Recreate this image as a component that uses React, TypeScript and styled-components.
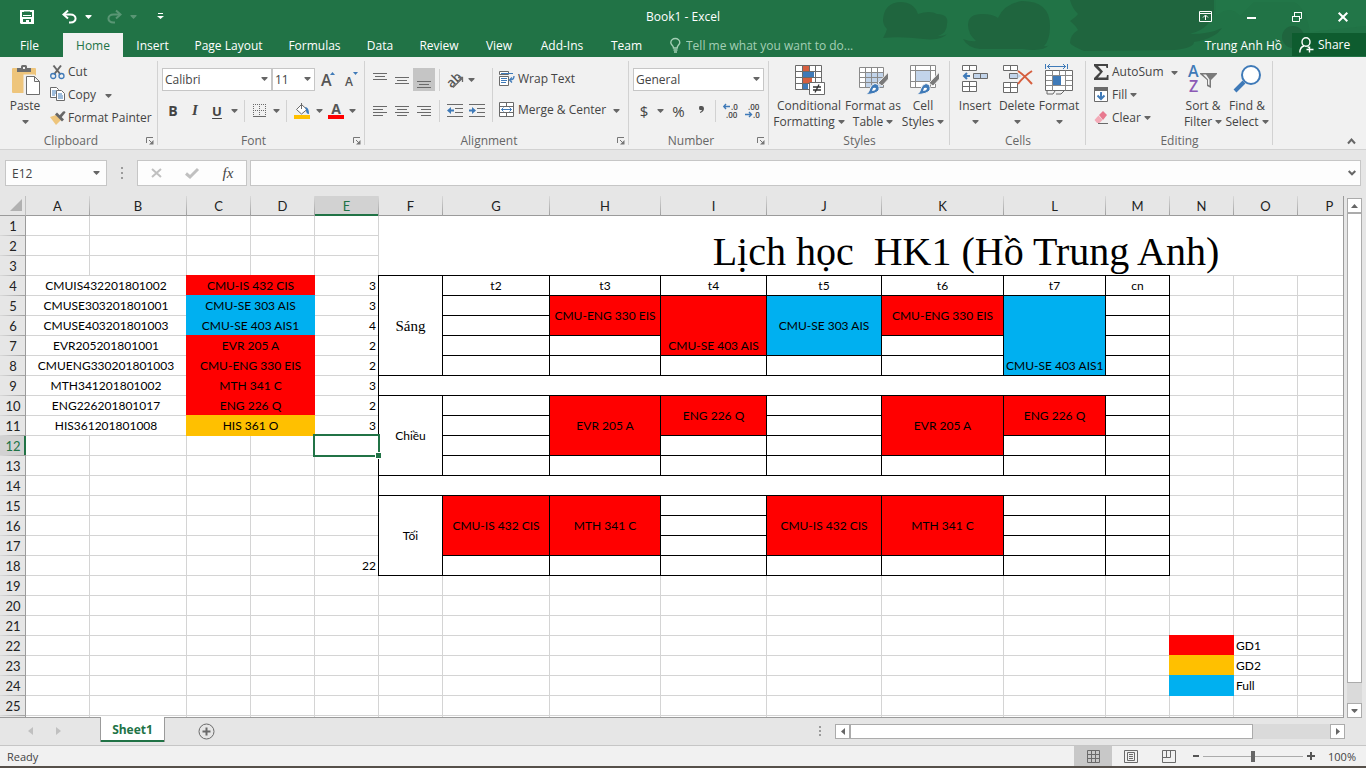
import React from "react";
import styled, { createGlobalStyle, css } from "styled-components";

const ui = '"Open Sans", "Noto Sans", sans-serif';
const cellFont = 'Lato, "Noto Sans", sans-serif';
const green = "#217346";
const RED = "#ff0000";
const BLUE = "#00b0f0";
const GOLD = "#ffc000";

const Global = createGlobalStyle`
  *, *::before, *::after { box-sizing: border-box; }
  body { margin: 0; background: #e6e6e6; font-family: ${ui}; font-size: 12px; color: #444; }
  button, input, select { font: inherit; color: inherit; }
  button { background: none; border: 0; padding: 0; margin: 0; white-space: nowrap; }
  svg { display: block; flex: none; overflow: visible; }
`;

const Window = styled.div`
  display: flex;
  flex-direction: column;
  height: 100vh;
  overflow: hidden;
`;

/* ---------- title bar and tabs ---------- */
const Header = styled.header`
  position: relative;
  flex: none;
  background: ${green};
  color: #fff;
`;
const Doodle = styled.svg`
  position: absolute;
  top: 0;
  right: 0;
  overflow: hidden;
`;
const TitleBar = styled.div`
  position: relative;
  display: grid;
  grid-template-columns: 1fr auto 1fr;
  align-items: center;
  height: 33px;
`;
const QuickAccess = styled.div`
  display: flex;
  align-items: center;
  padding-left: 16px;
`;
const QuickButton = styled.button<{ $w: number; $gap?: number; $dim?: boolean }>`
  display: flex;
  align-items: center;
  justify-content: center;
  width: ${(p) => p.$w}px;
  height: 24px;
  margin-left: ${(p) => p.$gap ?? 0}px;
  opacity: ${(p) => (p.$dim ? 0.25 : 1)};
`;
const Title = styled.h1`
  margin: 0;
  font-size: 12px;
  font-weight: 400;
`;
const WindowButtons = styled.div`
  display: flex;
  justify-content: flex-end;
`;
const WindowButton = styled.button`
  display: flex;
  align-items: center;
  justify-content: center;
  width: 46px;
  height: 30px;
`;
const TabBar = styled.nav`
  position: relative;
  display: flex;
  height: 24px;
`;
const Tab = styled.button<{ $w: number; $active?: boolean }>`
  width: ${(p) => p.$w}px;
  flex: none;
  color: ${(p) => (p.$active ? green : "#fff")};
  background: ${(p) => (p.$active ? "#f1f1f1" : "transparent")};
  &:first-child { padding-right: 4px; }
`;
const TellMe = styled.label`
  display: flex;
  align-items: center;
  gap: 5px;
  flex: 1;
  padding-left: 15px;
`;
const TellMeInput = styled.input`
  width: 190px;
  border: 0;
  padding: 0;
  background: transparent;
  outline: none;
  &::placeholder { color: #a3cfb5; opacity: 1; }
`;
const UserName = styled.button`
  margin-right: 10px;
`;
const ShareButton = styled.button`
  display: flex;
  align-items: center;
  gap: 4px;
  width: 74px;
  height: 23px;
  padding-left: 7px;
  background: #0e5c2f;
`;

/* ---------- ribbon ---------- */
const Ribbon = styled.section`
  flex: none;
  display: flex;
  height: 93px;
  padding-top: 4px;
  background: #f1f1f1;
  border-bottom: 1px solid #d2d2d2;
`;
const Group = styled.div<{ $w: number }>`
  flex: none;
  display: flex;
  flex-direction: column;
  width: ${(p) => p.$w}px;
  background: linear-gradient(#d2d2d2, #d2d2d2) right top / 1px 84px no-repeat;
`;
const GroupBody = styled.div<{ $pad?: number }>`
  flex: none;
  display: flex;
  height: 72px;
  padding-left: ${(p) => p.$pad ?? 4}px;
`;
const GroupFooter = styled.div`
  flex: none;
  display: flex;
  align-items: center;
  height: 16px;
  color: #666;
  button { margin: 0 4px; }
`;
const GroupName = styled.span`
  flex: 1;
  text-align: center;
  line-height: 16px;
`;
const Stack = styled.div<{ $gap?: number; $top?: number; $left?: number }>`
  display: flex;
  flex-direction: column;
  flex: none;
  gap: ${(p) => p.$gap ?? 0}px;
  padding-top: ${(p) => p.$top ?? 0}px;
  padding-left: ${(p) => p.$left ?? 0}px;
`;
const Line = styled.div`
  display: flex;
  align-items: center;
  height: 23px;
`;
const BigButton = styled.button<{ $w: number }>`
  display: flex;
  flex-direction: column;
  align-items: center;
  width: ${(p) => p.$w}px;
  padding-top: 4px;
  line-height: 16px;
`;
const BigIcon = styled.span`
  height: 33px;
`;
const WithCaret = styled.span`
  display: flex;
  align-items: center;
  justify-content: center;
  gap: 3px;
  height: 16px;
`;
const TextButton = styled.button<{ $w?: number }>`
  display: flex;
  align-items: center;
  gap: 3px;
  height: 23px;
  padding-bottom: 2px;
  width: ${(p) => (p.$w ? `${p.$w}px` : "auto")};
`;
const IconButton = styled.button<{ $w?: number; $active?: boolean }>`
  display: flex;
  align-items: center;
  justify-content: center;
  width: ${(p) => p.$w ?? 22}px;
  height: 23px;
  background: ${(p) => (p.$active ? "#c5c5c5" : "transparent")};
`;
const Glyph = styled.span<{ $b?: boolean; $i?: boolean; $u?: boolean; $serif?: boolean; $size?: number }>`
  font-size: ${(p) => p.$size ?? 14}px;
  font-weight: ${(p) => (p.$b ? 700 : 400)};
  font-style: ${(p) => (p.$i ? "italic" : "normal")};
  font-family: ${(p) => (p.$serif ? '"Liberation Serif", serif' : ui)};
  text-decoration: ${(p) => (p.$u ? "underline" : "none")};
  text-underline-offset: 2px;
`;
const Divider = styled.span<{ $h: number }>`
  flex: none;
  width: 1px;
  height: ${(p) => p.$h}px;
  margin: 0 4px;
  background: #d2d2d2;
`;
const ComboBox = styled.span<{ $w: number }>`
  position: relative;
  display: block;
  width: ${(p) => p.$w}px;
  height: 23px;
  svg { position: absolute; right: 4px; top: 9px; pointer-events: none; }
`;
const Select = styled.select`
  appearance: none;
  width: 100%;
  height: 100%;
  padding: 0 2px;
  border: 1px solid #c6c6c6;
  border-radius: 0;
  background: #fff;
`;
const Collapse = styled.button`
  display: flex;
  align-items: flex-end;
  justify-content: flex-end;
  flex: 1;
  padding: 0 10px 4px 0;
`;

/* ---------- formula bar ---------- */
const FormulaBar = styled.div`
  flex: none;
  display: flex;
  align-items: center;
  height: 46px;
  padding: 0 5px;
`;
const Field = styled.div<{ $w?: number }>`
  display: flex;
  align-items: center;
  height: 26px;
  background: #fdfdfd;
  border: 1px solid #c6c6c6;
  ${(p) => (p.$w ? css`flex: none; width: ${p.$w}px;` : css`flex: 1; margin-left: 3px;`)}
`;
const FieldInput = styled.input`
  flex: 1;
  min-width: 0;
  height: 100%;
  padding: 0 6px;
  border: 0;
  background: transparent;
  outline: none;
`;
const FieldButton = styled.button<{ $w: number }>`
  display: flex;
  align-items: center;
  justify-content: center;
  width: ${(p) => p.$w}px;
  height: 24px;
`;
const Grip = styled.span`
  display: flex;
  justify-content: center;
  width: 30px;
`;

/* ---------- sheet ---------- */
const SheetArea = styled.main`
  flex: 1;
  min-height: 0;
  display: flex;
`;
const Viewport = styled.div`
  flex: 1;
  min-width: 0;
  overflow: hidden;
  border-right: 1px solid #9b9b9b;
  border-bottom: 1px solid #9b9b9b;
`;
const Sheet = styled.table`
  table-layout: fixed;
  width: 1554px;
  border-collapse: separate;
  border-spacing: 0;
  background: #fff;
  color: #000;
  font-family: ${cellFont};
  font-size: 13px;
  line-height: 18px;
`;
const Corner = styled.td`
  height: 20px;
  padding: 0 3px 2px 0;
  background: #e6e6e6;
  border-right: 1px solid #c0c0c0;
  border-bottom: 1px solid #9b9b9b;
  svg { margin-left: auto; }
`;
const ColHead = styled.th<{ $on: boolean }>`
  height: 20px;
  padding: 0;
  font-weight: 400;
  background: ${(p) => (p.$on ? "#d2d2d2" : "#e6e6e6")};
  color: ${(p) => (p.$on ? green : "#222")};
  border-right: 1px solid;
  border-image: linear-gradient(#dcdcdc, #9b9b9b) 1;
  box-shadow: inset 0 -${(p) => (p.$on ? 2 : 1)}px 0 ${(p) => (p.$on ? green : "#9b9b9b")};
`;
const RowHead = styled.th<{ $on: boolean }>`
  height: 20px;
  padding: 0;
  font-weight: 400;
  background: ${(p) => (p.$on ? "#d2d2d2" : "#e6e6e6")};
  color: ${(p) => (p.$on ? green : "#222")};
  border-bottom: 1px solid;
  border-image: linear-gradient(90deg, #dcdcdc, #9b9b9b) 1;
  box-shadow: inset -${(p) => (p.$on ? 2 : 1)}px 0 0 ${(p) => (p.$on ? green : "#9b9b9b")};
`;
const Cell = styled.td<{ $edge?: string; $bg?: string; $align?: string; $v?: string; $font?: string }>`
  height: 20px;
  padding: 0 2px;
  font-size: 12px;
  white-space: nowrap;
  text-align: ${(p) => p.$align ?? "left"};
  vertical-align: ${(p) => p.$v ?? "bottom"};
  border-right: 1px solid ${(p) => p.$edge ?? "#d4d4d4"};
  border-bottom: 1px solid ${(p) => p.$edge ?? "#d4d4d4"};
  ${(p) => p.$bg && css`background: ${p.$bg};`}
  ${(p) => p.$edge && css`
    position: relative;
    box-shadow: -1px 0 0 ${p.$edge}, 0 -1px 0 ${p.$edge}, -1px -1px 0 ${p.$edge};
  `}
  ${(p) => p.$font === "title" && css`
    font-family: "Liberation Serif", serif;
    font-size: 40px;
    line-height: 46px;
    white-space: pre;
  `}
  ${(p) => p.$font === "serif" && css`
    font-family: "Liberation Serif", serif;
    font-size: 15px;
  `}
`;
const SelectedCell = styled(Cell)`
  position: relative;
  z-index: 2;
`;
const Selection = styled.span`
  position: absolute;
  inset: -2px;
  border: 2px solid ${green};
  &::after {
    content: "";
    position: absolute;
    right: -4px;
    bottom: -4px;
    width: 7px;
    height: 7px;
    background: ${green};
    border: 1px solid #fff;
  }
`;

/* ---------- scroll bars ---------- */
const VScroll = styled.div`
  flex: none;
  display: flex;
  flex-direction: column;
  width: 22px;
  padding: 2px 4px 0 3px;
`;
const ScrollButton = styled.button`
  display: flex;
  align-items: center;
  justify-content: center;
  flex: none;
  width: 15px;
  height: 15px;
  background: #fff;
  border: 1px solid #ababab;
`;
const Track = styled.div<{ $row?: boolean }>`
  flex: 1;
  display: flex;
  flex-direction: ${(p) => (p.$row ? "row" : "column")};
  background: #dadada;
`;
const Thumb = styled.div<{ $size: string }>`
  flex: 0 0 ${(p) => p.$size};
  background: #fff;
  border: 1px solid #ababab;
`;

/* ---------- sheet tabs and status bar ---------- */
const SheetBar = styled.div`
  flex: none;
  display: flex;
  align-items: flex-start;
  height: 27px;
  padding: 0 21px 0 16px;
`;
const NavButton = styled.button`
  display: flex;
  align-items: center;
  justify-content: center;
  width: 28px;
  height: 26px;
`;
const SheetTab = styled.button`
  width: 65px;
  height: 25px;
  margin: -1px 27px 0 28px;
  background: #fff;
  color: ${green};
  font-weight: 700;
  border: solid #9b9b9b;
  border-width: 0 1px;
  box-shadow: inset 0 -2px 0 ${green};
`;
const HScroll = styled.div`
  display: flex;
  width: 510px;
  height: 15px;
  margin: 6px 0 0 1px;
`;
const Spacer = styled.span`
  flex: 1;
`;
const StatusBar = styled.footer`
  flex: none;
  display: flex;
  align-items: center;
  height: 23px;
  padding-left: 7px;
  background: #f1f1f1;
  border-top: 1px solid #c6c6c6;
  border-bottom: 2px solid #56504a;
  font-size: 11px;
`;
const ViewButton = styled.button<{ $active?: boolean }>`
  display: flex;
  align-items: center;
  justify-content: center;
  width: 38px;
  height: 20px;
  background: ${(p) => (p.$active ? "#c8c8c8" : "transparent")};
`;
const ZoomButton = styled.button`
  width: 15px;
  height: 20px;
  display: flex;
  align-items: center;
  justify-content: center;
`;
const ZoomSlider = styled.input`
  appearance: none;
  width: 100px;
  height: 12px;
  margin: 0;
  background: linear-gradient(#ababab, #ababab) center / 100% 1px no-repeat;
  &::-webkit-slider-thumb {
    appearance: none;
    width: 4px;
    height: 11px;
    background: #666;
  }
`;
const ZoomValue = styled.button`
  width: 48px;
  text-align: center;
`;

/* ---------- icons ---------- */
const G = "#6a6a6a";
const B = "#3f7ab8";

const Caret = ({ color = "#666" }: { color?: string }) => (
  <svg width="7" height="4"><path d="M.5 0h6v1L3.500 4 .5 1z" fill={color} /></svg>
);
const Launcher = () => (
  <svg width="8" height="8" fill="none" stroke="#777">
    <path d="M.5 6V.5H7M3 3l3 3" /><path d="M7.500 3v4.500H3z" fill="#777" stroke="none" />
  </svg>
);
const Lines = ({ rows, y = 0 }: { rows: [number, number][]; y?: number }) => (
  <svg width="14" height="18" fill={G}>
    {rows.map(([x, w], i) => <rect key={i} x={x} y={y + i * 3} width={w} height="1" />)}
  </svg>
);
const SaveIcon = () => (
  <svg width="14" height="14">
    <path d="M0 0h14v14H1l-1-1z" fill="#fff" />
    <path d="M2 2h1v4h8V2h1v5H2zM4 1.500h6V5H4z" fill={green} />
    <path d="M3 2h8v3H3z" fill={green} /><path d="M3 9h8v3H9v-2H6v2H3z" fill={green} />
  </svg>
);
const UndoIcon = () => (
  <svg width="15" height="14" fill="none" stroke="#fff" strokeWidth="2">
    <path d="M6 .5L1.500 4.500 6 8.500" /><path d="M2 4.500h6.500c6.500 0 7 8 0 8H7" />
  </svg>
);
const RedoIcon = () => (
  <svg width="15" height="14" fill="none" stroke="#fff" strokeWidth="2">
    <path d="M9 .5l4.500 4L9 8.500" /><path d="M13 4.500H6.500c-6.500 0-7 8 0 8H8" />
  </svg>
);
const PasteIcon = () => (
  <svg width="29" height="31">
    <rect x="1" y="3" width="24" height="25" rx="1" fill="#eec57c" />
    <path d="M6 7V3h4V1.500Q10 0 11.500 0h3Q16 0 16 1.500V3h4v4z" fill="#6d6d6d" />
    <rect x="12" y="2" width="2" height="2" fill="#f1f1f1" />
    <path d="M14 11h9l5.500 5.500V30H14z" fill="#fff" stroke="#f1f1f1" strokeWidth="3" />
    <path d="M15.500 11.500h8l5 5v13h-13zM23.500 11.500v5h5" fill="#fff" stroke="#6d6d6d" />
  </svg>
);
const CutIcon = () => (
  <svg width="15" height="16" fill="none">
    <path d="M3.500 1.500l7 9M11 1.500l-7 9" stroke="#666" strokeWidth="2" />
    <circle cx="3.200" cy="12" r="2.500" stroke={B} strokeWidth="1.300" />
    <circle cx="11.500" cy="12" r="2.500" stroke={B} strokeWidth="1.300" />
  </svg>
);
const CopyIcon = () => (
  <svg width="15" height="15" fill="#fff" stroke={G}>
    <path d="M.5 .5h6l2 2v8h-8z" /><path d="M2 4h4M2 6h4M2 8h3" stroke={B} />
    <path d="M6.500 3.500h5l3 3v7h-8z" /><path d="M8 7h4M8 9h5M8 11h5" stroke={B} />
  </svg>
);
const BrushIcon = () => (
  <svg width="15" height="14">
    <path d="M0 6l6-2 5 5-5 5z" fill="#eec57c" /><path d="M5 3.500l2-2 7 7-2 2z" fill="#666" />
    <path d="M9 5l4-4.500q2-1 2.500 1L11 7z" fill="#666" />
  </svg>
);
const GrowIcon = ({ up }: { up?: boolean }) => (
  <svg width="14" height="16">
    <text x="0" y="14" fontSize={up ? 16 : 12} fontWeight="600" fill="#555" fontFamily="Open Sans">A</text>
    <path d={up ? "M9 3l2.500-3L14 3z" : "M8 0h5L10.500 3z"} fill={B} />
  </svg>
);
const BordersIcon = () => (
  <svg width="14" height="14" fill="none" stroke={G}>
    <path d="M.5 0v12M6.500 0v12M12.500 0v12M0 .5h13M0 6.500h13" strokeDasharray="1 1" />
    <path d="M0 12.500h13" />
  </svg>
);
const FillColorIcon = () => (
  <svg width="16" height="16">
    <path d="M7.500 1.500l5.500 5-5.500 4.500L2.500 6.500z" fill="#fff" stroke={G} /><path d="M7.500 6V0" stroke={G} />
    <path d="M11 4q4 0 4 7-3 0-3-4z" fill={B} /><rect y="12" width="16" height="4" fill={GOLD} />
  </svg>
);
const FontColorIcon = () => (
  <svg width="16" height="16">
    <text x="8" y="11" fontSize="14" fontWeight="700" textAnchor="middle" fill="#555" fontFamily="Open Sans">A</text>
    <rect y="12" width="16" height="4" fill={RED} />
  </svg>
);
const OrientIcon = () => (
  <svg width="16" height="16">
    <text x="-1" y="13" fontSize="13" fontWeight="600" fill="#555" fontFamily="Open Sans" transform="rotate(-45 6 8)">ab</text>
    <path d="M6 15.500L15 6.500M11 5.500h4.500V10" fill="none" stroke={G} strokeWidth="1.300" />
  </svg>
);
const IndentIcon = ({ right }: { right?: boolean }) => (
  <svg width="16" height="14" fill={G}>
    <path d="M0 0h16v1H0zM8 4h8v1H8zM8 8h8v1H8zM0 12h16v1H0z" />
    <path d={right ? "M7 6.500L3 3v2.500H0v2h3V10z" : "M0 6.500L4 3v2.500h3v2H4V10z"} fill={B} />
  </svg>
);
const WrapIcon = () => (
  <svg width="16" height="16" fill="none" stroke={G}>
    <path d="M.5 .5h9v3h-9zM.5 5.500h9v9h-9z" fill="#fff" />
    <path d="M2 2.500h12M2 7.500h6M2 9.500h6M2 11.500h5" stroke={B} />
    <path d="M15 5q0 4-4 4M13 6.500L10.500 9l2.500 2.500" stroke={B} strokeWidth="1.300" />
  </svg>
);
const MergeIcon = () => (
  <svg width="16" height="16" fill="none" stroke={G}>
    <path d="M.5 .5h14v14H.5zM.5 4.500h14M.5 10.500h14M7.500 .5v4M7.500 10.500v4" fill="#fff" />
    <path d="M2.500 7.500h10M4.500 5.500l-2 2 2 2M10.500 5.500l2 2-2 2" stroke={B} />
  </svg>
);
const DecimalIcon = ({ less }: { less?: boolean }) => (
  <svg width="17" height="16" fontFamily="Open Sans" fontSize="8" fontWeight="600">
    <text x={less ? 3 : 8} y="7" fill="#444">{less ? ".00" : ".0"}</text>
    <text x={less ? 8 : 3} y="15" fill="#444">{less ? ".0" : ".00"}</text>
    <path d={less ? "M0 11.500h6M4 9l2.500 2.500L4 14" : "M1 3.500h6M3 1L.8 3.500 3 6"} fill="none" stroke={B} strokeWidth="1.400" />
  </svg>
);
const gridPath = "M.5 .5h26v24H.5zM.5 6.500h26M.5 12.500h26M.5 18.500h26M7.500 .5v24M14.500 .5v24M20.500 .5v24";
const ConditionalIcon = () => (
  <svg width="28" height="31" fill="none">
    <path d={gridPath} fill="#fff" stroke={G} />
    <path d="M8 1h6v5H8zM8 13h9v5H8z" fill="#d65f3f" /><path d="M8 7h11v5H8zM8 19h5v5H8z" fill={B} />
    <path d="M14.500 17.500h15v12h-15z" fill="#fff" stroke={G} />
    <path d="M18 22h8M18 25h8M24 19.500l-4 8" stroke="#333" strokeWidth="1.300" />
  </svg>
);
const StyleBrush = () => (
  <>
    <path d="M29.500 7v7L23 21l-4-3z" fill="#7a7a7a" stroke="#f1f1f1" />
    <path d="M16 18.500q5 1 4 6.500-3 4.500-14 4.500 4-1 5-6 1-4 5-5z" fill={B} stroke="#f1f1f1" />
    <path d="M14 23q3-1 3 1-1 2-4 2z" fill="#fff" />
  </>
);
const TableStyleIcon = () => (
  <svg width="28" height="31" fill="none">
    <path d="M.5 2.500h24v20H.5z" fill="#fff" /><path d="M7 8h17v14H7z" fill="#c2d4ea" />
    <path d="M.5 2.500h24v20H.5zM.5 7.500h24M.5 12.500h24M.5 17.500h24M6.500 2.500v20M12.500 2.500v20M18.500 2.500v20" stroke="#8a8a8a" />
    <StyleBrush />
  </svg>
);
const CellStyleIcon = () => (
  <svg width="26" height="31" fill="none">
    <path d="M.5 .5h25v22H.5z" fill="#fff" /><path d="M6 6h14v10H6z" fill="#c2d4ea" />
    <path d="M.5 .5h25v22H.5zM.5 5.500h25M.5 16.500h25M5.500 .5v22M20.500 .5v22" stroke="#8a8a8a" />
    <StyleBrush />
  </svg>
);
const InsertIcon = () => (
  <svg width="26" height="31" fill="#fff" stroke={G}>
    <path d="M.5 .5h14v5h-14zM7.500 .5v5M.5 16.500h14v10h-14zM7.500 16.500v10M.5 21.500h14" />
    <path d="M11.500 8.500h14v5h-14zM18.500 8.500v5" fill="#c2d4ea" />
    <path d="M2 11h6M5 8l-3 3 3 3" fill="none" stroke={B} strokeWidth="2" />
  </svg>
);
const DeleteIcon = () => (
  <svg width="28" height="31" fill="#fff" stroke={G}>
    <path d="M.5 .5h14v5H.5zM7.500 .5v5M.5 17.500h14v10H.5zM7.500 17.500v10M.5 22.500h14" />
    <path d="M6.500 8.500h8v5h-8z" fill="#c2d4ea" /><path d="M14.500 8.500l4 2.500-4 2.500z" fill="#c2d4ea" stroke="none" />
    <path d="M15 6q6 4 14 13M29 6q-8 5-14 13" fill="none" stroke="#d65f3f" strokeWidth="2" />
  </svg>
);
const FormatIcon = () => (
  <svg width="28" height="31" fill="none">
    <path d="M.5 5.500h27v20H.5z" fill="#fff" stroke={G} />
    <path d="M.5 10.500h27M.5 20.500h27M7.500 5.500v20M14.500 5.500v5M20.500 5.500v20M1 15.500h7M20 15.500h7" stroke="#8a8a8a" />
    <path d="M8 11h8v9H8z" fill={B} /><path d="M2 26v3h6l2-3M11 29h5l3-3" stroke={G} />
    <path d="M.5-1v5M22.500-1v5M2 1.500h19M5-1L2.500 1.500 5 4M18-1l2.500 2.500L18 4" stroke={B} />
  </svg>
);
const SumIcon = () => (
  <svg width="16" height="16"><path d="M1 0h14v4h-1.500L13 2H5l5 5.500L5 13.500h8.500L14 11h1.500v5H1v-2l6-6-6-6z" fill="#444" /></svg>
);
const FillDownIcon = () => (
  <svg width="16" height="15" fill="none">
    <path d="M1.500 .5h13v14h-13z" fill="#fff" stroke={G} /><path d="M1 0h14v4H1z" fill={G} />
    <path d="M8 5v7M4.500 8.500L8 12l3.500-3.500" stroke={B} strokeWidth="2" />
  </svg>
);
const EraserIcon = () => (
  <svg width="16" height="14">
    <path d="M6 4l4-4 4 4-4 5z" fill="#e8798f" /><path d="M5.500 4.500l4 4.500-3 3H4L1.500 9z" fill="#f3aab7" />
    <path d="M5 12.500h10" stroke={G} />
  </svg>
);
const SortIcon = () => (
  <svg width="30" height="31" fontFamily="Open Sans" fontSize="16" fontWeight="600">
    <text x="0" y="12" fill={B}>A</text><text x="1" y="27" fill="#8c5ab5">Z</text>
    <path d="M12 8h17v1l-6 6v8l-4-2v-6l-7-6z" fill="#7a7a7a" />
    <path d="M15 9.500h3l3.500 5v6l-1.500-1v-5z" fill="#f1f1f1" />
  </svg>
);
const FindIcon = () => (
  <svg width="28" height="31" fill="none" stroke={B}>
    <path d="M11 17L2 26" strokeWidth="4" /><circle cx="18" cy="10" r="9" fill="#fff" strokeWidth="2" />
  </svg>
);
const BulbIcon = () => (
  <svg width="11" height="15" fill="none" stroke="#a3cfb5" strokeWidth="1.400">
    <path d="M3.500 10Q3.500 8.500 2 7 .8 5.500 .8 4.800a4.500 4.300 0 0 1 9 0Q9.800 5.500 8.500 7 7.200 8.500 7.200 10zM3.500 12h4M4 14h3" />
  </svg>
);
const PersonIcon = () => (
  <svg width="15" height="16" fill="none" stroke="#fff" strokeWidth="1.400">
    <ellipse cx="7" cy="5" rx="4" ry="4.300" /><path d="M.8 15.500Q1 10 5 9M8.500 9.500l1.500 1M10.500 9.500v6M7.500 12.500h7" />
  </svg>
);
const GridViewIcon = () => (
  <svg width="13" height="13" fill="none" stroke={G}><path d="M.5 .5h12v12H.5zM.5 4.500h12M.5 8.500h12M4.500 .5v12M8.500 .5v12" /></svg>
);
const PageViewIcon = () => (
  <svg width="14" height="13" fill="none" stroke={G}><path d="M.5 .5h13v12H.5zM3.500 2.500h7v8h-7zM5 4.500h4M5 6.500h4M5 8.500h4" /></svg>
);
const BreakViewIcon = () => (
  <svg width="14" height="13" fill="none" stroke={G}><path d="M.5 .5h13v12H.5zM.5 7.500h8v-7M4.500 .5v7" /></svg>
);

/* ---------- sheet data ---------- */
const columns: [string, number][] = [
  ["A", 64], ["B", 97], ["C", 64], ["D", 64], ["E", 64], ["F", 64], ["G", 107], ["H", 111], ["I", 106],
  ["J", 115], ["K", 122], ["L", 102], ["M", 64], ["N", 64], ["O", 64], ["P", 64], ["Q", 64], ["R", 64], ["S", 64],
];
type CellData = { t?: string; cs?: number; rs?: number; bg?: string; edge?: string; align?: string; v?: string; font?: string };
const cells: Record<string, CellData> = {};

const courses: [string, string, string, string][] = [
  ["CMUIS432201801002", "CMU-IS 432 CIS", RED, "3"],
  ["CMUSE303201801001", "CMU-SE 303 AIS", BLUE, "3"],
  ["CMUSE403201801003", "CMU-SE 403 AIS1", BLUE, "4"],
  ["EVR205201801001", "EVR 205 A", RED, "2"],
  ["CMUENG330201801003", "CMU-ENG 330 EIS", RED, "2"],
  ["MTH341201801002", "MTH 341 C", RED, "3"],
  ["ENG226201801017", "ENG 226 Q", RED, "2"],
  ["HIS361201801008", "HIS 361 O", GOLD, "3"],
];
courses.forEach(([code, name, bg, credits], i) => {
  const r = i + 4;
  cells[`A${r}`] = { t: code, cs: 2, align: "center" };
  cells[`C${r}`] = { t: name, cs: 2, align: "center", bg, edge: bg };
  cells[`E${r}`] = { t: credits, align: "right" };
});
cells.E18 = { t: "22", align: "right" };
cells.F1 = { t: "Lịch học  HK1 (Hồ Trung Anh)", cs: 14, rs: 3, align: "center", font: "title" };

for (let r = 4; r <= 18; r++) for (const c of "GHIJKLM") cells[c + r] = { edge: "#000" };
"GHIJKLM".split("").forEach((c, i) => {
  cells[`${c}4`] = { t: ["t2", "t3", "t4", "t5", "t6", "t7", "cn"][i], align: "center", edge: "#000" };
});
cells.F4 = { t: "Sáng", rs: 5, align: "center", v: "middle", edge: "#000", font: "serif" };
cells.F10 = { t: "Chiều", rs: 4, align: "center", v: "middle", edge: "#000" };
cells.F15 = { t: "Tối", rs: 4, align: "center", v: "middle", edge: "#000" };
cells.F9 = { cs: 8, edge: "#000" };
cells.F14 = { cs: 8, edge: "#000" };

const lesson = (at: string, t: string, rs: number, bg: string, v = "middle") => {
  cells[at] = { t, rs, bg, v, align: "center", edge: "#000" };
};
lesson("H5", "CMU-ENG 330 EIS", 2, RED);
lesson("I5", "CMU-SE 403 AIS", 3, RED, "bottom");
lesson("J5", "CMU-SE 303 AIS", 3, BLUE);
lesson("K5", "CMU-ENG 330 EIS", 2, RED);
lesson("L5", "CMU-SE 403 AIS1", 4, BLUE, "bottom");
lesson("H10", "EVR 205 A", 3, RED);
lesson("I10", "ENG 226 Q", 2, RED);
lesson("K10", "EVR 205 A", 3, RED);
lesson("L10", "ENG 226 Q", 2, RED);
lesson("G15", "CMU-IS 432 CIS", 3, RED);
lesson("H15", "MTH 341 C", 3, RED);
lesson("J15", "CMU-IS 432 CIS", 3, RED);
lesson("K15", "MTH 341 C", 3, RED);

[["GD1", RED], ["GD2", GOLD], ["Full", BLUE]].forEach(([t, bg], i) => {
  cells[`N${22 + i}`] = { bg, edge: bg };
  cells[`O${22 + i}`] = { t };
});

const covered = new Set<string>();
Object.entries(cells).forEach(([key, c]) => {
  const col = columns.findIndex(([n]) => n === key[0]);
  const row = Number(key.slice(1));
  for (let y = 0; y < (c.rs ?? 1); y++)
    for (let x = 0; x < (c.cs ?? 1); x++)
      if (x || y) covered.add(columns[col + x][0] + (row + y));
});

const rowNumbers = Array.from({ length: 26 }, (_, i) => i + 1);

const SheetCell = ({ id }: { id: string }) => {
  if (covered.has(id)) return null;
  if (id === "E12") return <SelectedCell><Selection /></SelectedCell>;
  const c = cells[id] ?? {};
  return (
    <Cell colSpan={c.cs} rowSpan={c.rs} $edge={c.edge} $bg={c.bg} $align={c.align} $v={c.v} $font={c.font}>
      {c.t}
    </Cell>
  );
};

const tabs: [string, number][] = [
  ["File", 63], ["Home", 60], ["Insert", 59], ["Page Layout", 93], ["Formulas", 79], ["Data", 52],
  ["Review", 66], ["View", 54], ["Add-Ins", 72], ["Team", 57],
];

const Footer = ({ name, launcher }: { name: string; launcher?: boolean }) => (
  <GroupFooter>
    <GroupName>{name}</GroupName>
    {launcher && <button aria-label={`${name} settings`}><Launcher /></button>}
  </GroupFooter>
);
const Drop = ({ w = 11, label }: { w?: number; label: string }) => (
  <IconButton $w={w} aria-label={label}><Caret /></IconButton>
);

export default function App() {
  return (
    <Window>
      <Global />
      <Header>
        <Doodle width="546" height="57" aria-hidden="true" fill="#1f653e">
          <path d="M63 20Q64 3 80 2q14 0 18 12 12-4 19 0 12 0 10 10 0 9-9 12 8 0 10-3-6 8-24 6Q80 36 63 38q3-5 4-9-4-4-4-9z" />
          <path d="M148 25q0-11 14-11 11 0 16 4 6-14 24-17 28 0 28 25 0 14-6 20 3 1 5-1-6 7-26 4H160q-12-1-17-10 8 3 13 2-8-7-8-16z" />
          <path d="M250 0h144v10q-2 18-24 24 20 0 32-6-6 10-28 14 0 6-20 8l-90 1q-12-5-14-8 0-8 8-13-2-4-8-9 6-4 8-7-6-6-8-14z" />
          <path d="M396 16q14-12 24 0l14-14h40q12 6 16 30l56-6V0H396z" fill="#247a4a" opacity=".5" />
          <circle cx="473" cy="37" r="11" />
        </Doodle>
        <TitleBar>
          <QuickAccess>
            <QuickButton $w={22} aria-label="Save"><SaveIcon /></QuickButton>
            <QuickButton $w={23} $gap={20} aria-label="Undo"><UndoIcon /></QuickButton>
            <QuickButton $w={14} aria-label="Undo history"><Caret color="#fff" /></QuickButton>
            <QuickButton $w={24} $gap={7} $dim aria-label="Redo"><RedoIcon /></QuickButton>
            <QuickButton $w={14} $dim aria-label="Redo history"><Caret color="#fff" /></QuickButton>
            <QuickButton $w={40} aria-label="Customize toolbar">
              <svg width="7" height="7" fill="#fff"><path d="M1 0h5v1H1zM0 3h7L3.500 6z" /></svg>
            </QuickButton>
          </QuickAccess>
          <Title>Book1 - Excel</Title>
          <WindowButtons>
            <WindowButton aria-label="Ribbon display options">
              <svg width="13" height="11" fill="none" stroke="#fff"><path d="M.5 .5h12v10H.5zM.5 2.500h12M6.500 9V4.500M4 6.500L6.500 4 9 6.500" /></svg>
            </WindowButton>
            <WindowButton aria-label="Minimize">
              <svg width="9" height="4"><path d="M0 2h9v2H0z" fill="#fff" /></svg>
            </WindowButton>
            <WindowButton aria-label="Restore">
              <svg width="10" height="10" fill="none" stroke="#fff"><path d="M.5 4.500h7v5h-7zM2.500 4V.5h7v6H8" /><path d="M0 4h8v1H0zM2 0h8v1H2z" fill="#fff" stroke="none" /></svg>
            </WindowButton>
            <WindowButton aria-label="Close">
              <svg width="10" height="10" fill="none" stroke="#fff" strokeWidth="2"><path d="M.7 .7l8.600 8.600M9.300 .7L.7 9.300" /></svg>
            </WindowButton>
          </WindowButtons>
        </TitleBar>
        <TabBar>
          {tabs.map(([name, w]) => (
            <Tab key={name} $w={w} $active={name === "Home"}>{name}</Tab>
          ))}
          <TellMe>
            <BulbIcon />
            <TellMeInput aria-label="Tell me" placeholder="Tell me what you want to do..." />
          </TellMe>
          <UserName>Trung Anh Hồ</UserName>
          <ShareButton><PersonIcon />Share</ShareButton>
        </TabBar>
      </Header>

      <Ribbon>
        <Group $w={158}>
          <GroupBody>
            <BigButton $w={42}>
              <BigIcon><PasteIcon /></BigIcon>Paste<WithCaret><Caret /></WithCaret>
            </BigButton>
            <Stack $left={4}>
              <TextButton><CutIcon />Cut</TextButton>
              <Line><TextButton $w={53}><CopyIcon />Copy</TextButton><Drop label="Copy options" /></Line>
              <TextButton><BrushIcon />Format Painter</TextButton>
            </Stack>
          </GroupBody>
          <Footer name="Clipboard" launcher />
        </Group>

        <Group $w={207}>
          <GroupBody>
            <Stack $gap={8} $top={7}>
              <Line>
                <ComboBox $w={110}>
                  <Select aria-label="Font"><option>Calibri</option></Select><Caret />
                </ComboBox>
                <ComboBox $w={43}>
                  <Select aria-label="Font size"><option>11</option></Select><Caret />
                </ComboBox>
                <IconButton $w={26} aria-label="Increase font size"><GrowIcon up /></IconButton>
                <IconButton aria-label="Decrease font size"><GrowIcon /></IconButton>
              </Line>
              <Line>
                <IconButton aria-label="Bold"><Glyph $b>B</Glyph></IconButton>
                <IconButton aria-label="Italic"><Glyph $i $b $serif $size={15}>I</Glyph></IconButton>
                <IconButton aria-label="Underline"><Glyph $u $b $size={13}>U</Glyph></IconButton>
                <Drop w={12} label="Underline options" />
                <Divider $h={22} />
                <IconButton aria-label="Borders"><BordersIcon /></IconButton>
                <Drop label="Border options" />
                <Divider $h={22} />
                <IconButton aria-label="Fill color"><FillColorIcon /></IconButton>
                <Drop w={12} label="Fill color options" />
                <IconButton aria-label="Font color"><FontColorIcon /></IconButton>
                <Drop label="Font color options" />
              </Line>
            </Stack>
          </GroupBody>
          <Footer name="Font" launcher />
        </Group>

        <Group $w={264}>
          <GroupBody>
            <Stack $gap={8} $top={7}>
              <Line>
                <IconButton aria-label="Top align"><Lines y={2} rows={[[0, 14], [2, 10], [0, 14]]} /></IconButton>
                <IconButton aria-label="Middle align"><Lines y={6} rows={[[0, 14], [2, 10], [0, 14]]} /></IconButton>
                <IconButton $active aria-label="Bottom align"><Lines y={10} rows={[[0, 14], [2, 10], [0, 14]]} /></IconButton>
                <Divider $h={22} />
                <IconButton aria-label="Orientation"><OrientIcon /></IconButton>
                <Drop label="Orientation options" />
              </Line>
              <Line>
                <IconButton aria-label="Align left"><Lines y={4} rows={[[0, 14], [0, 10], [0, 14], [0, 10]]} /></IconButton>
                <IconButton aria-label="Center"><Lines y={4} rows={[[0, 14], [2, 10], [0, 14], [2, 10]]} /></IconButton>
                <IconButton aria-label="Align right"><Lines y={4} rows={[[0, 14], [4, 10], [0, 14], [4, 10]]} /></IconButton>
                <Divider $h={22} />
                <IconButton aria-label="Decrease indent"><IndentIcon /></IconButton>
                <IconButton aria-label="Increase indent"><IndentIcon right /></IconButton>
              </Line>
            </Stack>
            <Stack $top={7}><Divider $h={54} /></Stack>
            <Stack $gap={8} $top={7} $left={2}>
              <Line><TextButton><WrapIcon />Wrap Text</TextButton></Line>
              <Line><TextButton $w={112}><MergeIcon />Merge &amp; Center</TextButton><Drop label="Merge options" /></Line>
            </Stack>
          </GroupBody>
          <Footer name="Alignment" launcher />
        </Group>

        <Group $w={140}>
          <GroupBody>
            <Stack $gap={8} $top={7}>
              <Line>
                <ComboBox $w={131}>
                  <Select aria-label="Number format"><option>General</option></Select><Caret />
                </ComboBox>
              </Line>
              <Line>
                <IconButton aria-label="Currency"><Glyph $size={15}>$</Glyph></IconButton>
                <Drop label="Currency options" />
                <IconButton $w={25} aria-label="Percent"><Glyph $size={15}>%</Glyph></IconButton>
                <IconButton $w={20} aria-label="Comma">
                  <svg width="5" height="10" fill="#555"><path d="M1 0h2q2 0 2 2.500Q5 5.500 1 7v-1q2-1 2-2H1Q0 4 0 2 0 0 1 0z" /></svg>
                </IconButton>
                <Divider $h={22} />
                <IconButton aria-label="Increase decimal"><DecimalIcon /></IconButton>
                <IconButton aria-label="Decrease decimal"><DecimalIcon less /></IconButton>
              </Line>
            </Stack>
          </GroupBody>
          <Footer name="Number" launcher />
        </Group>

        <Group $w={181}>
          <GroupBody>
            <BigButton $w={72}><BigIcon><ConditionalIcon /></BigIcon>Conditional<WithCaret>Formatting<Caret /></WithCaret></BigButton>
            <BigButton $w={56}><BigIcon><TableStyleIcon /></BigIcon>Format as<WithCaret>Table<Caret /></WithCaret></BigButton>
            <BigButton $w={44}><BigIcon><CellStyleIcon /></BigIcon>Cell<WithCaret>Styles<Caret /></WithCaret></BigButton>
          </GroupBody>
          <Footer name="Styles" />
        </Group>

        <Group $w={136}>
          <GroupBody>
            <BigButton $w={42}><BigIcon><InsertIcon /></BigIcon>Insert<WithCaret><Caret /></WithCaret></BigButton>
            <BigButton $w={42}><BigIcon><DeleteIcon /></BigIcon>Delete<WithCaret><Caret /></WithCaret></BigButton>
            <BigButton $w={42}><BigIcon><FormatIcon /></BigIcon>Format<WithCaret><Caret /></WithCaret></BigButton>
          </GroupBody>
          <Footer name="Cells" />
        </Group>

        <Group $w={187}>
          <GroupBody $pad={7}>
            <Stack>
              <Line><TextButton $w={76}><SumIcon />AutoSum</TextButton><Drop label="AutoSum options" /></Line>
              <TextButton><FillDownIcon />Fill<Caret /></TextButton>
              <TextButton><EraserIcon />Clear<Caret /></TextButton>
            </Stack>
            <BigButton $w={46}><BigIcon><SortIcon /></BigIcon>Sort &amp;<WithCaret>Filter<Caret /></WithCaret></BigButton>
            <BigButton $w={42}><BigIcon><FindIcon /></BigIcon>Find &amp;<WithCaret>Select<Caret /></WithCaret></BigButton>
          </GroupBody>
          <Footer name="Editing" />
        </Group>
        <Collapse aria-label="Collapse ribbon">
          <svg width="9" height="7" fill="none" stroke="#666" strokeWidth="2"><path d="M1 5.500l3.500-4 3.500 4" /></svg>
        </Collapse>
      </Ribbon>

      <FormulaBar>
        <Field $w={102}>
          <FieldInput aria-label="Name box" defaultValue="E12" />
          <FieldButton $w={20} aria-label="Names"><Caret /></FieldButton>
        </Field>
        <Grip><svg width="2" height="12" fill="#9b9b9b"><path d="M0 0h2v2H0zM0 5h2v2H0zM0 10h2v2H0z" /></svg></Grip>
        <Field $w={110}>
          <FieldButton $w={36} aria-label="Cancel">
            <svg width="11" height="10" fill="none" stroke="#c0c0c0" strokeWidth="2"><path d="M1 1l9 8M10 1L1 9" /></svg>
          </FieldButton>
          <FieldButton $w={36} aria-label="Enter">
            <svg width="14" height="11" fill="none" stroke="#c0c0c0" strokeWidth="3"><path d="M1 5.500L5 9l8-8" /></svg>
          </FieldButton>
          <FieldButton $w={36} aria-label="Insert function"><Glyph $i $serif $size={15}>fx</Glyph></FieldButton>
        </Field>
        <Field>
          <FieldInput aria-label="Formula" />
          <FieldButton $w={16} aria-label="Expand formula bar">
            <svg width="8" height="6" fill="none" stroke="#666" strokeWidth="2"><path d="M.7 1L4 4.300 7.300 1" /></svg>
          </FieldButton>
        </Field>
      </FormulaBar>

      <SheetArea>
        <Viewport>
          <Sheet>
            <colgroup>
              <col width={26} />
              {columns.map(([n, w]) => <col key={n} width={w} />)}
            </colgroup>
            <thead>
              <tr>
                <Corner><svg width="12" height="12"><path d="M12 0v12H0z" fill="#b1b1b1" /></svg></Corner>
                {columns.map(([n]) => <ColHead key={n} $on={n === "E"} scope="col">{n}</ColHead>)}
              </tr>
            </thead>
            <tbody>
              {rowNumbers.map((r) => (
                <tr key={r}>
                  <RowHead $on={r === 12} scope="row">{r}</RowHead>
                  {columns.map(([n]) => <SheetCell key={n} id={n + r} />)}
                </tr>
              ))}
            </tbody>
          </Sheet>
        </Viewport>
        <VScroll>
          <ScrollButton aria-label="Scroll up"><svg width="7" height="4"><path d="M0 4h7L3.500 0z" fill="#666" /></svg></ScrollButton>
          <Track><Thumb $size="96%" /></Track>
          <ScrollButton aria-label="Scroll down"><Caret /></ScrollButton>
        </VScroll>
      </SheetArea>

      <SheetBar>
        <NavButton aria-label="Previous sheet"><svg width="5" height="8"><path d="M5 0v8L0 4z" fill="#c0c0c0" /></svg></NavButton>
        <NavButton aria-label="Next sheet"><svg width="5" height="8"><path d="M0 0v8l5-4z" fill="#c0c0c0" /></svg></NavButton>
        <SheetTab>Sheet1</SheetTab>
        <NavButton aria-label="New sheet">
          <svg width="17" height="17" fill="none" stroke={G}><circle cx="8.500" cy="8.500" r="7.500" /><path d="M4.500 8.500h8M8.500 4.500v8" strokeWidth="2" /></svg>
        </NavButton>
        <Spacer />
        <NavButton as="span"><svg width="2" height="10" fill="#9b9b9b"><path d="M0 0h2v2H0zM0 4h2v2H0zM0 8h2v2H0z" /></svg></NavButton>
        <HScroll>
          <ScrollButton aria-label="Scroll left"><svg width="4" height="7"><path d="M4 0v7L0 3.500z" fill="#666" /></svg></ScrollButton>
          <Track $row><Thumb $size="84%" /></Track>
          <ScrollButton aria-label="Scroll right"><svg width="4" height="7"><path d="M0 0v7l4-3.500z" fill="#666" /></svg></ScrollButton>
        </HScroll>
      </SheetBar>

      <StatusBar>
        Ready
        <Spacer />
        <ViewButton $active aria-label="Normal view"><GridViewIcon /></ViewButton>
        <ViewButton aria-label="Page layout view"><PageViewIcon /></ViewButton>
        <ViewButton aria-label="Page break view"><BreakViewIcon /></ViewButton>
        <ZoomButton aria-label="Zoom out"><svg width="6" height="2"><path d="M0 0h6v2H0z" fill="#555" /></svg></ZoomButton>
        <ZoomSlider type="range" min={0} max={100} defaultValue={50} aria-label="Zoom" />
        <ZoomButton aria-label="Zoom in"><svg width="8" height="8"><path d="M0 3h8v2H0zM3 0h2v8H3z" fill="#555" /></svg></ZoomButton>
        <ZoomValue>100%</ZoomValue>
      </StatusBar>
    </Window>
  );
}
